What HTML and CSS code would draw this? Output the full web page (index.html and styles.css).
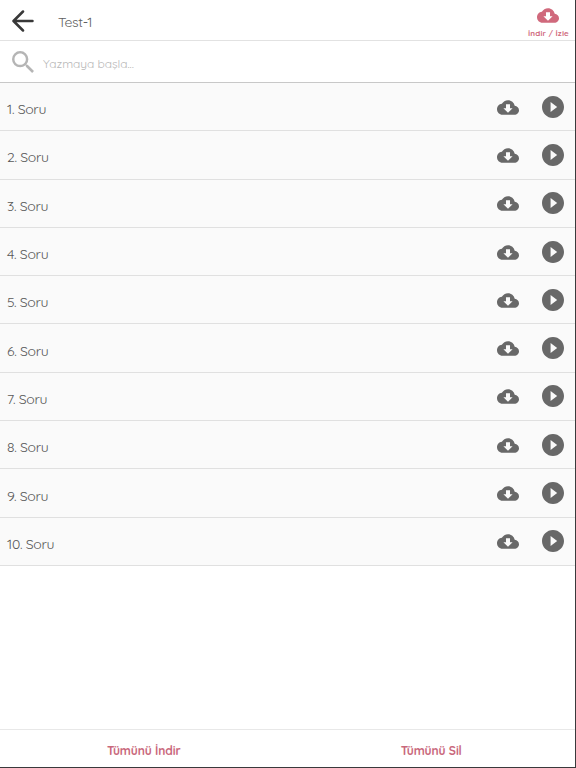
FILE: index.html
```html
<!DOCTYPE html>
<html lang="tr">
<head>
    <meta charset="UTF-8">
    <meta name="viewport" content="width=device-width, initial-scale=1.0">
    <title>Test-1</title>
    <link rel="stylesheet" href="styles.css">
</head>
<body>
    <svg class="symbols">
        <symbol id="cloud" viewBox="0 4 24 16">
            <path d="M19.35 10.04C18.67 6.59 15.64 4 12 4 9.11 4 6.6 5.64 5.35 8.04 2.34 8.36 0 10.91 0 14c0 3.31 2.69 6 6 6h13c2.76 0 5-2.24 5-5 0-2.64-2.05-4.78-4.65-4.96zM17 12.8L12 17.8 7 12.8H9.8V8.5h4.4v4.3h2.8z"/>
        </symbol>
        <symbol id="play" viewBox="2 2 20 20">
            <path d="M12 2C6.48 2 2 6.48 2 12s4.48 10 10 10 10-4.48 10-10S17.52 2 12 2zm-2.2 14.5v-9l6 4.5-6 4.5z"/>
        </symbol>
    </svg>

    <header class="topbar">
        <svg class="back" viewBox="0 0 22 22"><path d="M20.5 11H2M11 1.5L1.5 11l9.5 9.5"/></svg>
        <h1 class="title">Test-1</h1>
        <div class="download">
            <svg class="cloud"><use href="#cloud"/></svg>
            <span class="download-label">İndir / İzle</span>
        </div>
    </header>

    <div class="search">
        <svg class="search-icon" viewBox="3 3 17.5 17.5"><path d="M15.5 14h-.79l-.28-.27A6.47 6.47 0 0 0 16 9.5 6.5 6.5 0 1 0 9.5 16c1.61 0 3.09-.59 4.23-1.57l.27.28v.79l5 4.99L20.49 19l-4.99-5zm-6 0C7.01 14 5 11.99 5 9.5S7.01 5 9.5 5 14 7.01 14 9.5 11.99 14 9.5 14z"/></svg>
        <span class="placeholder">Yazmaya başla...</span>
    </div>

    <ul class="list">
        <li class="row"><span class="name">1. Soru</span><svg class="cloud"><use href="#cloud"/></svg><svg class="play"><use href="#play"/></svg></li>
        <li class="row"><span class="name">2. Soru</span><svg class="cloud"><use href="#cloud"/></svg><svg class="play"><use href="#play"/></svg></li>
        <li class="row"><span class="name">3. Soru</span><svg class="cloud"><use href="#cloud"/></svg><svg class="play"><use href="#play"/></svg></li>
        <li class="row"><span class="name">4. Soru</span><svg class="cloud"><use href="#cloud"/></svg><svg class="play"><use href="#play"/></svg></li>
        <li class="row"><span class="name">5. Soru</span><svg class="cloud"><use href="#cloud"/></svg><svg class="play"><use href="#play"/></svg></li>
        <li class="row"><span class="name">6. Soru</span><svg class="cloud"><use href="#cloud"/></svg><svg class="play"><use href="#play"/></svg></li>
        <li class="row"><span class="name">7. Soru</span><svg class="cloud"><use href="#cloud"/></svg><svg class="play"><use href="#play"/></svg></li>
        <li class="row"><span class="name">8. Soru</span><svg class="cloud"><use href="#cloud"/></svg><svg class="play"><use href="#play"/></svg></li>
        <li class="row"><span class="name">9. Soru</span><svg class="cloud"><use href="#cloud"/></svg><svg class="play"><use href="#play"/></svg></li>
        <li class="row"><span class="name">10. Soru</span><svg class="cloud"><use href="#cloud"/></svg><svg class="play"><use href="#play"/></svg></li>
    </ul>

    <footer class="actions">
        <span class="action">Tümünü İndir</span>
        <span class="action">Tümünü Sil</span>
    </footer>
</body>
</html>
```

FILE: styles.css
```css
* {
    box-sizing: border-box;
}

body {
    margin: 0;
    height: 768px;
    display: flex;
    flex-direction: column;
    overflow: hidden;
    background: #ffffff;
    color: #606060;
    font-family: Quicksand, Lato, sans-serif;
    border-right: 1px solid #3a3a3c;
    border-bottom: 1px solid #3a3a3c;
}

svg {
    display: block;
    flex: none;
    fill: currentColor;
}

.symbols {
    display: none;
}

.cloud {
    width: 22px;
    height: 15px;
}

.play {
    width: 22px;
    height: 22px;
}

.topbar {
    display: flex;
    align-items: center;
    height: 41px;
    padding: 0 6px 0 12px;
    border-bottom: 1px solid #e2e2e2;
}

.back {
    width: 22px;
    height: 22px;
    margin-top: 1px;
    fill: none;
    stroke: #383838;
    stroke-width: 2.5;
    stroke-linecap: round;
    stroke-linejoin: round;
}

.title {
    flex: 1;
    margin: 4px 0 0 24px;
    font-size: 14px;
    font-weight: 400;
    line-height: 18px;
    letter-spacing: -0.3px;
}

.download {
    display: flex;
    flex-direction: column;
    align-items: center;
    gap: 4px;
    margin-top: 6px;
    color: #d0697c;
}

.download-label {
    font-size: 8px;
    font-weight: 700;
    line-height: 12px;
    letter-spacing: 0.15px;
}

.search {
    display: flex;
    align-items: center;
    height: 42px;
    padding-left: 12px;
    border-bottom: 1px solid #c8c8c8;
    color: #b5b5b5;
}

.search-icon {
    width: 22px;
    height: 22px;
}

.placeholder {
    margin: 4px 0 0 9px;
    font-size: 12px;
    line-height: 16px;
    letter-spacing: -0.05px;
    color: #b8b8b8;
}

.list {
    margin: 0;
    padding: 0;
    list-style: none;
    background: #fafafa;
}

.row {
    display: flex;
    align-items: center;
    height: 48.3px;
    padding: 0 11px 0 7px;
    border-bottom: 1px solid #e0e0e0;
    color: #686868;
}

.row .cloud {
    margin-top: 1px;
}

.row .play {
    margin: 0 0 0 23px;
}

.name {
    flex: 1;
    margin-top: 5px;
    font-size: 14px;
    line-height: 18px;
    letter-spacing: -0.3px;
    color: #585858;
}

.actions {
    display: flex;
    height: 38px;
    margin-top: auto;
    border-top: 1px solid #e8e8e8;
}

.action {
    flex: 1;
    padding-top: 2px;
    text-align: center;
    font-size: 12px;
    font-weight: 700;
    line-height: 37px;
    letter-spacing: -0.1px;
    color: #c9687c;
}
```
